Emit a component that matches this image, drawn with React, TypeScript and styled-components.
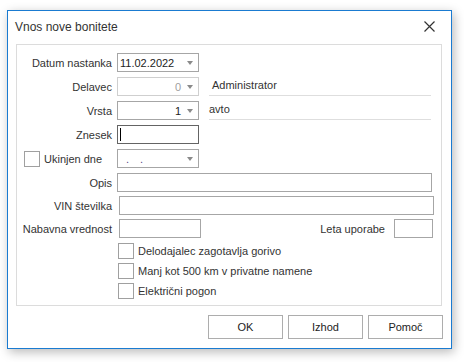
import styled, { createGlobalStyle } from 'styled-components';

const GlobalStyle = createGlobalStyle`
  html, body {
    margin: 0;
    padding: 0;
    background: #ffffff;
  }
  body {
    font-family: 'Liberation Sans', Arial, sans-serif;
    font-size: 11px;
    color: #333333;
  }
`;

const App = () => {
  return (
    <>
      <GlobalStyle />
      <Page>
        <Window>
          <TitleBar>
            <Title>Vnos nove bonitete</Title>
            <CloseBtn>
              <svg width="11" height="11" viewBox="0 0 11 11">
                <path d="M0.5 0.5 L10.5 10.5 M10.5 0.5 L0.5 10.5" stroke="#333" strokeWidth="1.2" />
              </svg>
            </CloseBtn>
          </TitleBar>

          <GroupBox>
            <Row>
              <Label>Datum nastanka</Label>
              <Combo>
                <ComboText>11.02.2022</ComboText>
                <Arrow />
              </Combo>
            </Row>

            <Row>
              <Label>Delavec</Label>
              <Combo $disabled>
                <ComboText $right $muted>0</ComboText>
                <Arrow />
              </Combo>
              <LinkedValue $indent={3}>Administrator</LinkedValue>
            </Row>

            <Row>
              <Label>Vrsta</Label>
              <Combo>
                <ComboText $right>1</ComboText>
                <Arrow />
              </Combo>
              <LinkedValue $indent={0}>avto</LinkedValue>
            </Row>

            <Row>
              <Label>Znesek</Label>
              <TextBox $width={82} $focused>
                <Caret />
              </TextBox>
            </Row>

            <Row>
              <CheckLabel $inset={7} $width={93}>
                <CheckBox />
                <span>Ukinjen dne</span>
              </CheckLabel>
              <Combo>
                <ComboText $dots>. .</ComboText>
                <Arrow />
              </Combo>
            </Row>

            <Row>
              <Label>Opis</Label>
              <TextBox $width={315} />
            </Row>

            <Row $shift={-1}>
              <Label $pad={7}>VIN številka</Label>
              <TextBox $width={315} />
            </Row>

            <Row $shift={-1} $padRight={8}>
              <Label $pad={7}>Nabavna vrednost</Label>
              <TextBox $width={82} />
              <Spacer />
              <PlainLabel>Leta uporabe</PlainLabel>
              <TextBox $width={39} />
            </Row>

            <CheckRow>
              <CheckLabel $inset={101}>
                <CheckBox />
                <span>Delodajalec zagotavlja gorivo</span>
              </CheckLabel>
            </CheckRow>
            <CheckRow>
              <CheckLabel $inset={101}>
                <CheckBox />
                <span>Manj kot 500 km v privatne namene</span>
              </CheckLabel>
            </CheckRow>
            <CheckRow>
              <CheckLabel $inset={101}>
                <CheckBox />
                <span>Električni pogon</span>
              </CheckLabel>
            </CheckRow>
          </GroupBox>

          <Footer>
            <Button>OK</Button>
            <Button>Izhod</Button>
            <Button>Pomoč</Button>
          </Footer>
        </Window>
      </Page>
    </>
  );
};

export default App;

const Page = styled.div`
  width: 464px;
  height: 362px;
  padding: 10px 0 0 7px;
  box-sizing: border-box;
`;

const Window = styled.div`
  width: 445px;
  height: 339px;
  box-sizing: border-box;
  border: 1px solid #1a7bd1;
  background: #ffffff;
  box-shadow: 2px 3px 10px rgba(0, 0, 0, 0.28);
  display: flex;
  flex-direction: column;
`;

const TitleBar = styled.div`
  height: 33px;
  display: flex;
  align-items: center;
  justify-content: space-between;
  padding: 0 16px 0 7px;
  box-sizing: border-box;
`;

const Title = styled.div`
  font-size: 12px;
  color: #333333;
  margin-top: -2px;
`;

const CloseBtn = styled.div`
  width: 11px;
  height: 11px;
  display: flex;
  margin-top: -2px;
`;

const GroupBox = styled.div`
  margin: 0 9px 0 8px;
  height: 262px;
  border: 1px solid #dcdcdc;
  box-sizing: border-box;
  padding-top: 8px;
  overflow: hidden;
  display: flex;
  flex-direction: column;
  gap: 5px;
`;

const Row = styled.div<{ $shift?: number; $padRight?: number }>`
  height: 19px;
  display: flex;
  align-items: center;
  margin-top: ${(p) => p.$shift ?? 0}px;
  padding-right: ${(p) => p.$padRight ?? 0}px;
`;

const CheckRow = styled.div`
  height: 15px;
  display: flex;
  align-items: center;
`;

const Label = styled.div<{ $pad?: number }>`
  width: 95px;
  flex-shrink: 0;
  display: flex;
  justify-content: flex-end;
  white-space: nowrap;
  margin-right: ${(p) => p.$pad ?? 5}px;
`;

const PlainLabel = styled.div`
  white-space: nowrap;
  margin-right: 9px;
`;

const Spacer = styled.div`
  flex: 1;
`;

const Combo = styled.div<{ $disabled?: boolean }>`
  width: 82px;
  height: 19px;
  box-sizing: border-box;
  border: 1px solid ${(p) => (p.$disabled ? '#cfcfcf' : '#a6a6a6')};
  display: flex;
  align-items: center;
  padding: 0 5px 0 2px;
  flex-shrink: 0;
`;

const ComboText = styled.div<{ $right?: boolean; $muted?: boolean; $dots?: boolean }>`
  flex: 1;
  text-align: ${(p) => (p.$right ? 'right' : 'left')};
  padding-right: ${(p) => (p.$right ? 6 : 0)}px;
  padding-left: ${(p) => (p.$dots ? 6 : 0)}px;
  color: ${(p) => (p.$muted ? '#a0a0a0' : p.$dots ? '#5a4a8a' : '#222222')};
  letter-spacing: ${(p) => (p.$dots ? '4px' : '0')};
  white-space: nowrap;
`;

const Arrow = styled.div`
  width: 0;
  height: 0;
  border-left: 3.5px solid transparent;
  border-right: 3.5px solid transparent;
  border-top: 4px solid #8a8a8a;
`;

const LinkedValue = styled.div<{ $indent: number }>`
  width: 222px;
  margin-left: 10px;
  padding-left: ${(p) => p.$indent}px;
  box-sizing: border-box;
  height: 19px;
  line-height: 17px;
  border-bottom: 1px solid #dedede;
  white-space: nowrap;
`;

const TextBox = styled.div<{ $width: number; $focused?: boolean }>`
  width: ${(p) => p.$width}px;
  height: 19px;
  box-sizing: border-box;
  border: 1px solid ${(p) => (p.$focused ? '#646464' : '#a6a6a6')};
  flex-shrink: 0;
  display: flex;
  align-items: center;
  padding-left: 2px;
`;

const Caret = styled.div`
  width: 1px;
  height: 13px;
  background: #000000;
`;

const CheckLabel = styled.label<{ $inset: number; $width?: number }>`
  display: flex;
  align-items: center;
  gap: 4px;
  margin-left: ${(p) => p.$inset}px;
  width: ${(p) => (p.$width ? `${p.$width}px` : 'auto')};
  flex-shrink: 0;
  white-space: nowrap;
`;

const CheckBox = styled.span`
  width: 16px;
  height: 16px;
  box-sizing: border-box;
  border: 1px solid #a0a0a0;
  background: #ffffff;
  display: inline-block;
  flex-shrink: 0;
`;

const Footer = styled.div`
  display: flex;
  justify-content: flex-end;
  gap: 5px;
  padding: 9px 8px 0 0;
`;

const Button = styled.div`
  width: 75px;
  height: 24px;
  box-sizing: border-box;
  border: 1px solid #adadad;
  background: #ffffff;
  display: flex;
  align-items: center;
  justify-content: center;
  color: #222222;
`;
